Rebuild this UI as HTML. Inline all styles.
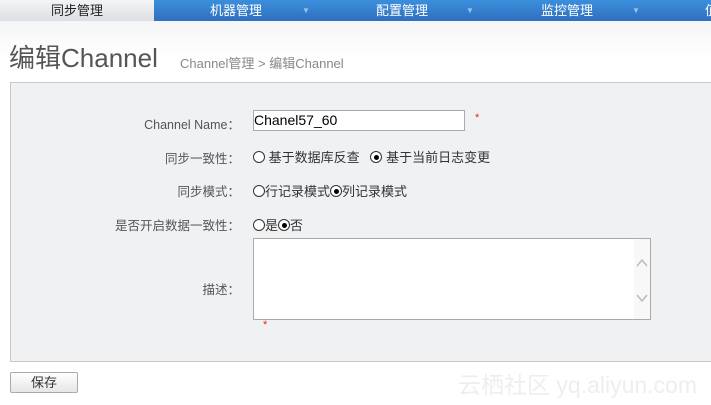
<!DOCTYPE html><html><head><meta charset="utf-8"><style>
body{margin:0;width:711px;height:405px;overflow:hidden;background:linear-gradient(#f0f1f3,#fff 60px);font-family:"Liberation Sans","Noto Sans CJK SC",sans-serif;position:relative}
.nav{position:absolute;top:0;left:0;width:711px;height:21px;background:linear-gradient(#3b8fdc,#2f6fbf);}
.nav div{position:absolute;top:0;height:21px;line-height:21px;font-size:13px;color:#fff}
.t1{left:0;width:154px;background:linear-gradient(#f4f5f7,#dcdee2);color:#222!important;text-align:center}
.arr{font-size:8px!important;color:#9cc3ee!important}
.a{position:absolute;white-space:nowrap}
.lbl{position:absolute;font-size:12.5px;color:#555;text-align:right;right:471px;white-space:nowrap}
.r{display:inline-block;width:10px;height:10px;border:1px solid #333;border-radius:50%;vertical-align:-1px;position:relative;background:#fff}
.r.on::after{content:"";position:absolute;left:2.5px;top:2.5px;width:5px;height:5px;border-radius:50%;background:#000}
.f{position:absolute;font-size:13px;color:#333;white-space:nowrap}
</style></head><body>
<div class="nav">
<div class="t1">同步管理</div>
<div style="left:210px">机器管理</div><div class="arr" style="left:302px">▼</div>
<div style="left:376px">配置管理</div><div class="arr" style="left:466px">▼</div>
<div style="left:541px">监控管理</div><div class="arr" style="left:632px">▼</div>
<div style="left:705px">值</div>
</div>
<div class="a" style="left:9px;top:38px;font-size:26px;color:#555">编辑Channel</div>
<div class="a" style="left:180px;top:53px;font-size:13px;color:#888">Channel管理 &gt; 编辑Channel</div>
<div style="position:absolute;left:10px;top:82px;width:720px;height:278px;background:#f0f1f3;border:1px solid #c8c8c8"></div>
<div class="lbl" style="top:114px">Channel Name：</div>
<div style="position:absolute;left:253px;top:110px;width:210px;height:19px;background:#fff;border:1px solid #aaa;font-size:14px;line-height:19px;color:#000">Chanel57_60</div>
<div class="a" style="left:475px;top:112px;color:#e22;font-size:11px">*</div>
<div class="lbl" style="top:148px">同步一致性：</div>
<div class="f" style="left:253px;top:147px"><span class="r"></span> 基于数据库反查 &nbsp;&nbsp;<span class="r on"></span> 基于当前日志变更</div>
<div class="lbl" style="top:181px">同步模式：</div>
<div class="f" style="left:253px;top:181px"><span class="r"></span>行记录模式<span class="r on"></span>列记录模式</div>
<div class="lbl" style="top:215px">是否开启数据一致性：</div>
<div class="f" style="left:253px;top:215px"><span class="r"></span>是<span class="r on"></span>否</div>
<div class="lbl" style="top:279px">描述：</div>
<div style="position:absolute;left:253px;top:238px;width:396px;height:80px;background:#fff;border:1px solid #aaa"><div style="position:absolute;right:0;top:0;width:16px;height:80px;background:#f8f8f8">
<svg width="16" height="80" style="position:absolute;left:0;top:0"><path d="M3 27 L8 21 L13 27 M3 56 L8 62 L13 56" stroke="#bbb" stroke-width="1.5" fill="none"/></svg></div></div>
<div class="a" style="left:263px;top:319px;color:#e22;font-size:11px">*</div>
<div style="position:absolute;left:10px;top:372px;width:66px;height:19px;border:1px solid #aaa;border-radius:2px;background:linear-gradient(#fff,#e6e6e6);font-size:13px;text-align:center;line-height:19px;color:#333">保存</div>
<div class="a" style="left:458px;top:366px;font-size:23px;color:#eee">云栖社区 yq.aliyun.com</div>
</body></html>
